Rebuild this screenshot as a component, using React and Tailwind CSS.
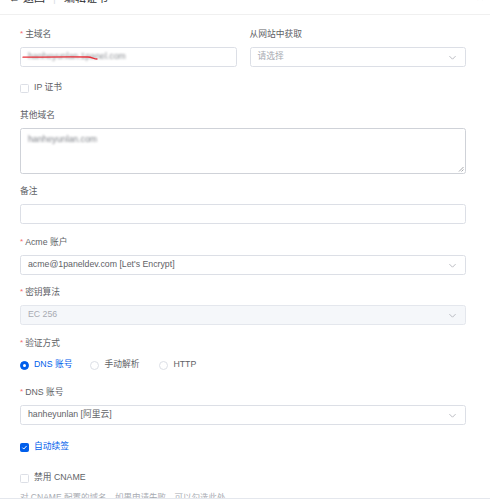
import { useState } from 'react'

const font = { fontFamily: '"Liberation Sans", "Noto Sans CJK SC", sans-serif' }

const Chevron = () => (
  <svg width="9" height="9" viewBox="0 0 16 16" className="text-[#a8abb2]">
    <path d="M3 6l5 5 5-5" fill="none" stroke="currentColor" strokeWidth="1.4" strokeLinecap="round" strokeLinejoin="round" />
  </svg>
)

const Label = ({ children, required, className = '' }) => (
  <div className={`h-[12px] leading-[12px] text-[8.75px] text-[#606266] flex items-center mb-[7px] ${className}`}>
    {required && <span className="text-[#f56c6c] mr-[2px] text-[8px]">*</span>}
    {children}
  </div>
)

const Select = ({ value, placeholder, disabled }) => (
  <div
    className={`h-[20px] rounded-[2.5px] border flex items-center justify-between pl-[7px] pr-[8px] text-[8.75px] ${
      disabled ? 'bg-[#f5f7fa] border-[#e4e7ed] text-[#a8abb2]' : 'bg-white border-[#dcdfe6] text-[#606266]'
    }`}
  >
    <span className={value ? '' : 'text-[#a8abb2]'}>{value || placeholder}</span>
    <Chevron />
  </div>
)

const Checkbox = ({ checked, children }) => (
  <div className="h-[12px] flex items-center gap-[5px] text-[8.75px]">
    <span
      className={`w-[9px] h-[9px] rounded-[1.5px] border flex items-center justify-center ${
        checked ? 'bg-[#005eeb] border-[#005eeb]' : 'bg-white border-[#dcdfe6]'
      }`}
    >
      {checked && (
        <svg width="7" height="7" viewBox="0 0 10 10">
          <path d="M2 5.2l2 2 4-4.4" fill="none" stroke="white" strokeWidth="1.4" />
        </svg>
      )}
    </span>
    <span className={checked ? 'text-[#005eeb]' : 'text-[#606266]'}>{children}</span>
  </div>
)

const Radio = ({ checked, children }) => (
  <div className="flex items-center gap-[5px] text-[8.75px]">
    <span
      className={`w-[9px] h-[9px] rounded-full border flex items-center justify-center ${
        checked ? 'bg-[#005eeb] border-[#005eeb]' : 'bg-white border-[#dcdfe6]'
      }`}
    >
      {checked && <span className="w-[3px] h-[3px] rounded-full bg-white" />}
    </span>
    <span className={checked ? 'text-[#005eeb]' : 'text-[#606266]'}>{children}</span>
  </div>
)

export default function App() {
  const [method] = useState('dns')

  return (
    <div className="w-[490px] h-[500px] bg-white overflow-hidden" style={font}>
      {/* page header, scrolled mostly out of view */}
      <div className="h-[15px] border-b border-[#f0f0f0] overflow-hidden relative">
        <div className="flex items-center gap-[8px] pl-[9px] -mt-[8px] h-[12px] text-[11px] leading-[12px] text-[#303133]">
          <span>← 返回</span>
          <span className="text-[#dcdfe6]">|</span>
          <span>编辑证书</span>
        </div>
        <span className="absolute right-[6px] -top-[8px] text-[10px] leading-[12px] text-[#909399]">✕</span>
      </div>

      <div className="pl-[20px] pr-[24px]">
        <div className="grid grid-cols-2 gap-x-[13px] mt-[13px]">
          <div>
            <Label required>主域名</Label>
            <div className="h-[20px] rounded-[2.5px] border border-[#dcdfe6] relative flex items-center pl-[7px]">
              <span className="text-[8.75px] text-[#8d9095] blur-[1.2px]">hanheyunlan.1panel.com</span>
              <svg className="absolute left-[1px] top-[6px]" width="80" height="8" viewBox="0 0 80 8">
                <path d="M1 3.2 C20 3, 50 2.6, 66 3 C70 3.2, 72 5, 75 5" fill="none" stroke="#e8303a" strokeWidth="1.3" strokeLinecap="round" />
              </svg>
            </div>
          </div>
          <div>
            <Label>从网站中获取</Label>
            <Select placeholder="请选择" />
          </div>
        </div>

        <div className="mt-[15px]">
          <Checkbox>IP 证书</Checkbox>
        </div>

        <Label className="mt-[15px]">其他域名</Label>
        <div className="h-[46px] rounded-[2.5px] border border-[#cfd2d8] relative pl-[7px] pt-[4px] text-[8.75px] leading-[12px]">
          <span className="text-[#7d8087] blur-[1px]">hanheyunlan.com</span>
          <svg className="absolute right-[1px] bottom-[1px]" width="6" height="6" viewBox="0 0 6 6">
            <path d="M5.5 1L1 5.5M5.5 3.5L3.5 5.5" stroke="#8d9095" strokeWidth="0.8" />
          </svg>
        </div>

        <Label className="mt-[11px]">备注</Label>
        <div className="h-[20px] rounded-[2.5px] border border-[#dcdfe6]" />

        <Label required className="mt-[12px]">Acme 账户</Label>
        <Select value="acme@1paneldev.com [Let's Encrypt]" />

        <Label required className="mt-[11px]">密钥算法</Label>
        <Select value="EC 256" disabled />

        <Label required className="mt-[12px]">验证方式</Label>
        <div className="h-[12px] mt-[10px] flex items-center gap-[18px]">
          <Radio checked={method === 'dns'}>DNS 账号</Radio>
          <Radio checked={method === 'manual'}>手动解析</Radio>
          <div className="ml-[2px]">
            <Radio checked={method === 'http'}>HTTP</Radio>
          </div>
        </div>

        <Label required className="mt-[15px]">DNS 账号</Label>
        <Select value="hanheyunlan [阿里云]" />

        <div className="mt-[16px]">
          <Checkbox checked>自动续签</Checkbox>
        </div>

        <div className="mt-[19px]">
          <Checkbox>禁用 CNAME</Checkbox>
        </div>

        <div className="mt-[7px] h-[7px] overflow-hidden">
          <div className="text-[8.5px] leading-[12px] text-[#a8abb2]">
            对 CNAME 配置的域名，如果申请失败，可以勾选此处
          </div>
        </div>
      </div>
      <div className="border-t border-[#e4e7ed]" />
    </div>
  )
}
